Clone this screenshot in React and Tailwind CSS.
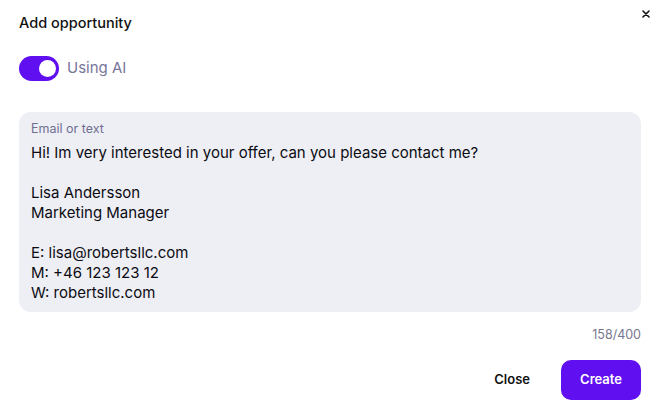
import React, { useState } from 'react';

export default function App() {
  const [useAi, setUseAi] = useState(true);
  const text = `Hi! Im very interested in your offer, can you please contact me?

Lisa Andersson
Marketing Manager

E: lisa@robertsllc.com
M: +46 123 123 12
W: robertsllc.com`;

  return (
    <div className="w-[660px] h-[405px] bg-white relative text-[#111] font-['Inter',sans-serif]">
      {/* close */}
      <button className="absolute right-[9px] top-[9px] w-[10px] h-[10px] flex items-center justify-center">
        <svg width="8" height="8" viewBox="0 0 8 8" fill="none" stroke="#111" strokeWidth="1.6" strokeLinecap="round">
          <path d="M1 1l6 6M7 1L1 7" />
        </svg>
      </button>

      <div className="px-[19px] pt-[13px] flex flex-col">
        <h2 className="text-[14.5px] font-medium leading-[20px]">Add opportunity</h2>

        <div className="mt-[23px] flex items-center gap-[8px]">
          <button
            onClick={() => setUseAi(!useAi)}
            className={`w-[40px] h-[25px] rounded-full flex items-center px-[3px] ${useAi ? 'bg-[#6010f0] justify-end' : 'bg-gray-300 justify-start'}`}
          >
            <span className="w-[17px] h-[17px] rounded-full bg-white" />
          </button>
          <span className="text-[15px] text-[#77769a]">Using AI</span>
        </div>

        <div className="mt-[31px] h-[200px] rounded-[12px] bg-[#eeeff5] px-[12px] pt-[9px]">
          <div className="text-[12.5px] leading-[16px] text-[#6f6e90]">Email or text</div>
          <div className="mt-[6px] text-[15px] leading-[20px] whitespace-pre-line text-[#0b0b12]">{text}</div>
        </div>

        <div className="mt-[15px] text-right text-[12.5px] leading-[16px] text-[#77768f]">158/400</div>

        <div className="mt-[17px] flex justify-end items-center gap-[31px]">
          <button className="text-[13px] font-semibold text-[#111]">Close</button>
          <button className="w-[80px] h-[40px] rounded-[10px] bg-[#6010f0] text-white text-[13px] font-semibold">Create</button>
        </div>
      </div>
    </div>
  );
}
